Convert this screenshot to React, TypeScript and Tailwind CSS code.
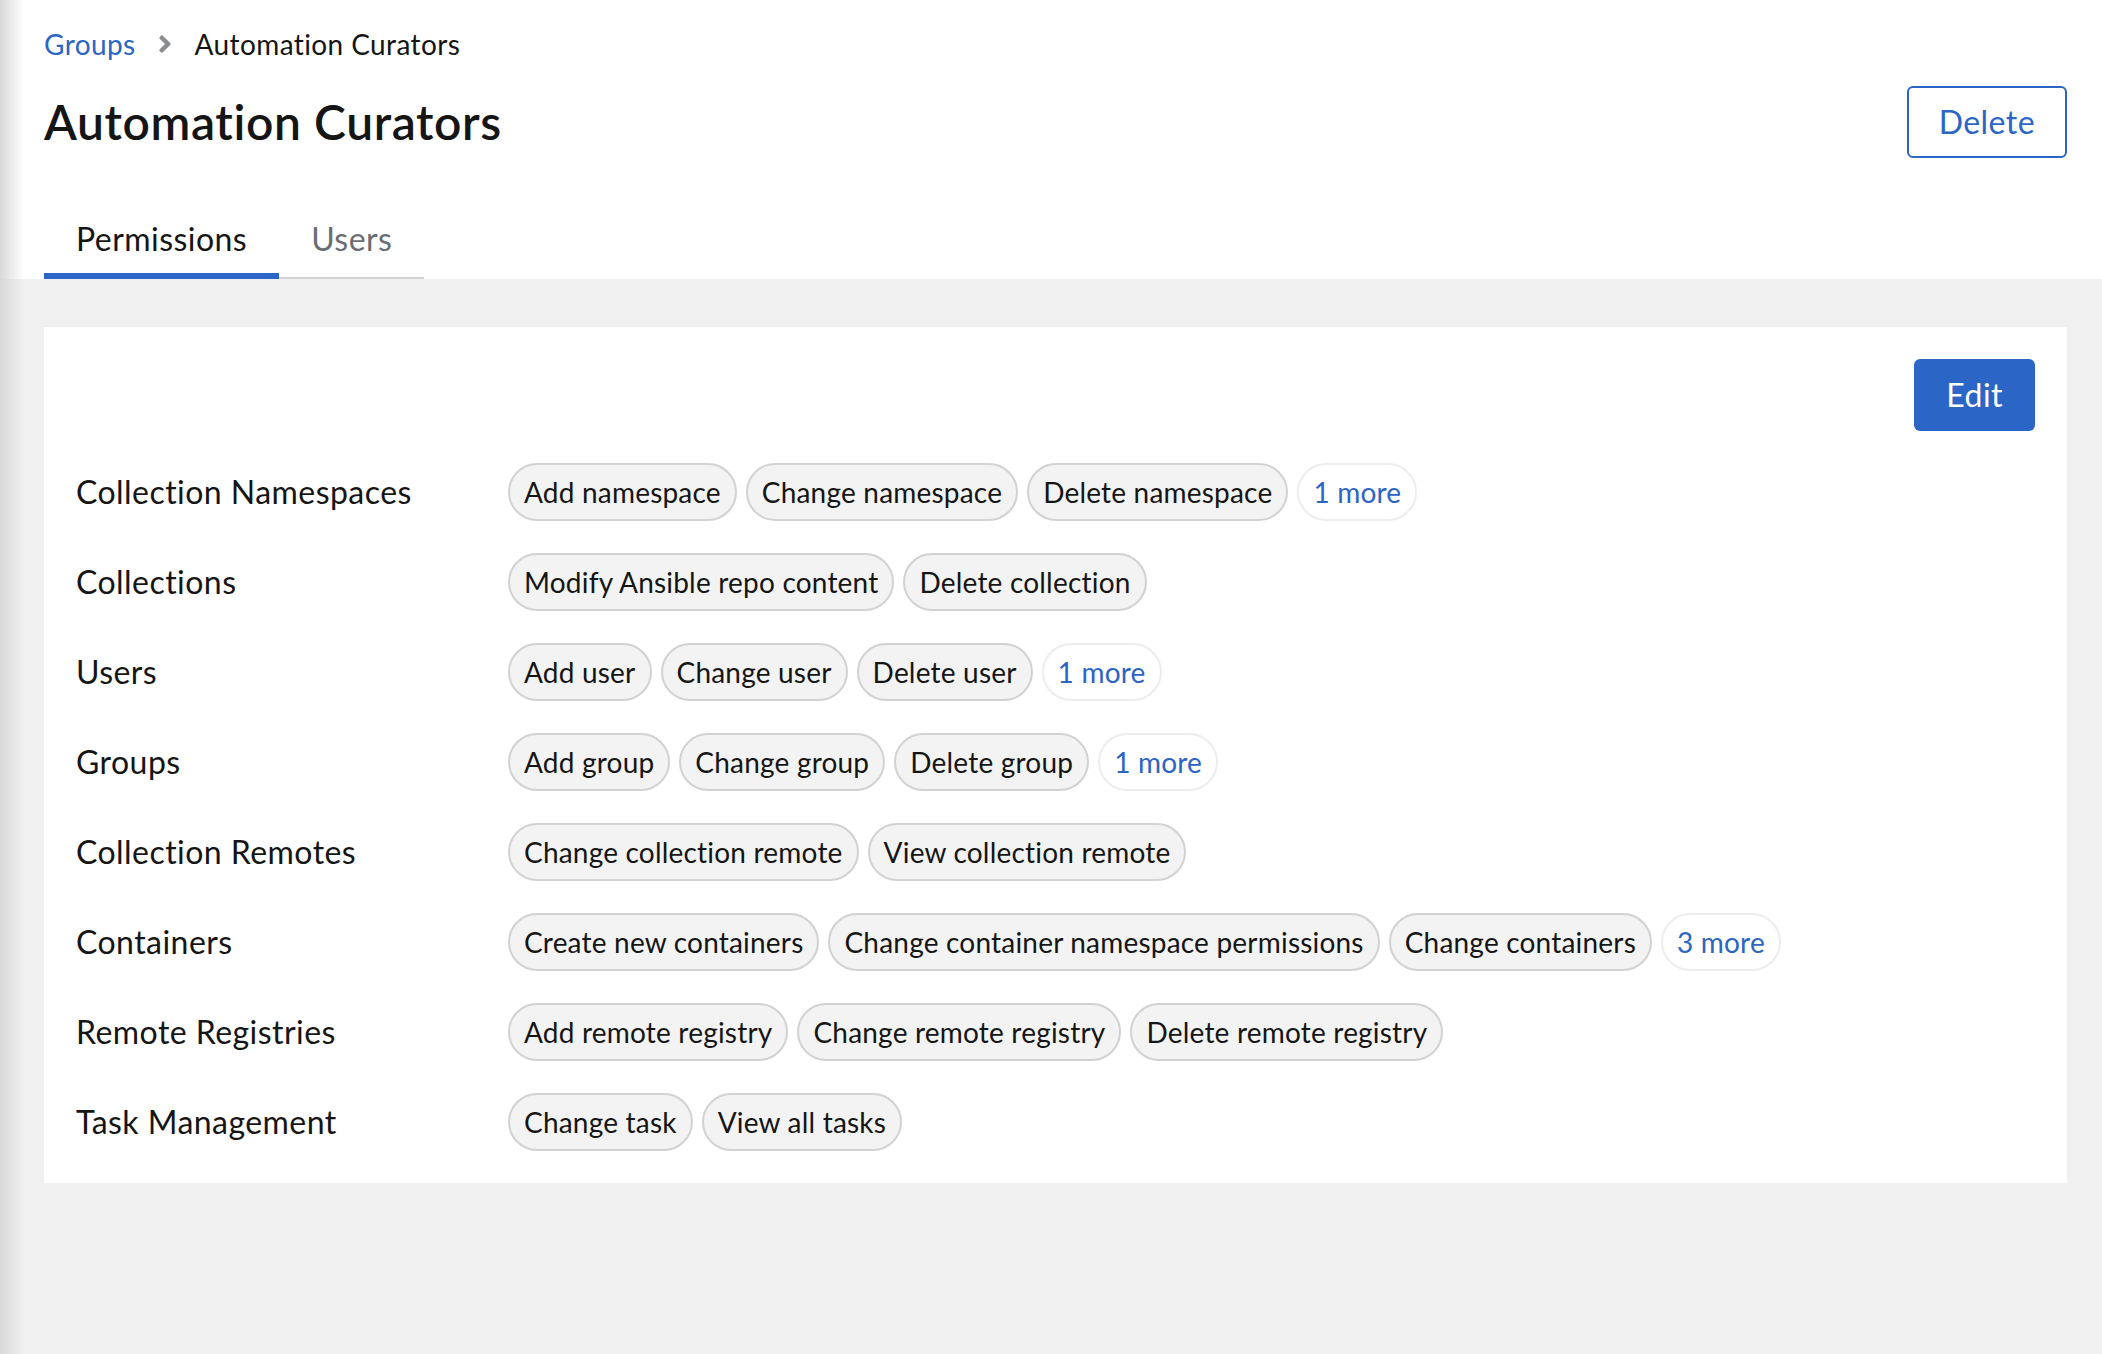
type PermissionRow = {
  label: string;
  items: string[];
  more?: number;
};

const rows: PermissionRow[] = [
  { label: 'Collection Namespaces', items: ['Add namespace', 'Change namespace', 'Delete namespace'], more: 1 },
  { label: 'Collections', items: ['Modify Ansible repo content', 'Delete collection'] },
  { label: 'Users', items: ['Add user', 'Change user', 'Delete user'], more: 1 },
  { label: 'Groups', items: ['Add group', 'Change group', 'Delete group'], more: 1 },
  { label: 'Collection Remotes', items: ['Change collection remote', 'View collection remote'] },
  {
    label: 'Containers',
    items: ['Create new containers', 'Change container namespace permissions', 'Change containers'],
    more: 3,
  },
  { label: 'Remote Registries', items: ['Add remote registry', 'Change remote registry', 'Delete remote registry'] },
  { label: 'Task Management', items: ['Change task', 'View all tasks'] },
];

const Chip = ({ text }: { text: string }) => (
  <span className="flex h-[58px] items-center rounded-full border-2 border-[#d2d2d2] bg-[#f3f3f3] px-[14px] text-[28px] leading-[42px] tracking-[0.2px] whitespace-nowrap text-[#151515]">
    {text}
  </span>
);

const MoreChip = ({ count }: { count: number }) => (
  <button className="flex h-[58px] items-center rounded-full border-2 border-[#ededed] bg-white px-[14px] text-[28px] leading-[42px] tracking-[0.2px] whitespace-nowrap text-[#2b65c6]">
    {count} more
  </button>
);

// font awesome style angle-right used by the breadcrumb
const AngleRight = () => (
  <svg width="14" height="28" viewBox="0 0 256 512" className="fill-[#8a8d90]">
    <path d="M224.3 273l-136 136c-9.4 9.4-24.6 9.4-33.9 0l-22.6-22.6c-9.4-9.4-9.4-24.6 0-33.9l96.4-96.4-96.4-96.4c-9.4-9.4-9.4-24.6 0-33.9L54.3 103c9.4-9.4 24.6-9.4 33.9 0l136 136c9.5 9.4 9.5 24.6.1 34z" />
  </svg>
);

const App = () => {
  return (
    <div className="relative min-h-[1354px] bg-[#f0f0f0] font-['Lato',sans-serif] text-[#151515]">
      <div className="pointer-events-none absolute inset-y-0 left-0 w-[24px] bg-gradient-to-r from-[#d8d8d8] to-transparent" />

      <header className="bg-white pt-[23px] pr-[35px] pl-[44px]">
        <nav className="flex items-center text-[28px] leading-[42px] tracking-[0.4px]">
          <a className="text-[#2b65c6]">Groups</a>
          <span className="mr-[23px] ml-[22px] flex items-center">
            <AngleRight />
          </span>
          <span>Automation Curators</span>
        </nav>

        <div className="mt-[21px] flex h-[72px] items-center justify-between">
          <h1 className="text-[48px] leading-[58px] font-semibold tracking-[0.6px]">Automation Curators</h1>
          <button className="h-[72px] rounded-[6px] border-2 border-[#2b65c6] px-[30px] text-[32px] tracking-[0.45px] text-[#2b65c6]">
            Delete
          </button>
        </div>

        <div className="mt-[41px] flex text-[32px] leading-[48px] tracking-[0.45px]">
          <button className="border-b-[6px] border-[#2b65c6] px-8 pt-4 pb-[10px]">Permissions</button>
          <button className="border-b-2 border-[#d2d2d2] px-8 pt-4 pb-[14px] text-[#6a6e73]">Users</button>
        </div>
      </header>

      <main className="pt-[48px] pr-[35px] pl-[44px]">
        <section className="bg-white p-8">
          <div className="flex justify-end">
            <button className="h-[72px] rounded-[6px] bg-[#2b65c6] px-8 text-[32px] tracking-[0.45px] text-white">
              Edit
            </button>
          </div>

          <div className="mt-8 flex flex-col gap-8">
            {rows.map((row) => (
              <div key={row.label} className="grid grid-cols-[432px_1fr] items-center">
                <div className="text-[32px] leading-[48px] tracking-[0.45px]">{row.label}</div>
                <div className="flex flex-wrap gap-[9px]">
                  {row.items.map((item) => (
                    <Chip key={item} text={item} />
                  ))}
                  {row.more && <MoreChip count={row.more} />}
                </div>
              </div>
            ))}
          </div>
        </section>
      </main>
    </div>
  );
};

export default App;
